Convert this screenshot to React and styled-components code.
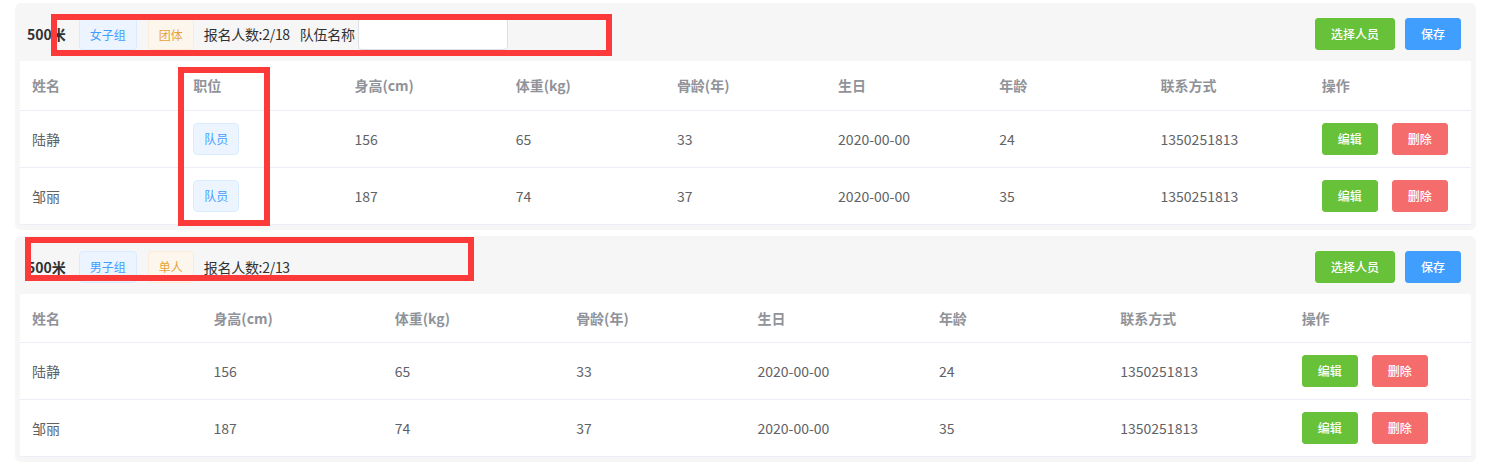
import React from "react";
import styled, { createGlobalStyle } from "styled-components";

const Global = createGlobalStyle`
  html, body { margin: 0; padding: 0; background: #fff; }
  body { font-family: "Noto Sans CJK SC", "Noto Sans", "Liberation Sans", sans-serif; font-size: 14px; color: #606266; }
  * { box-sizing: border-box; }
`;

const Page = styled.div`
  position: relative;
  width: 1498px;
  height: 466px;
  padding: 3px 22px 0 15px;
  display: flex;
  flex-direction: column;
  gap: 6px;
  overflow: hidden;
`;

const Card = styled.section`
  background: #f6f6f6;
  border-radius: 6px;
  padding: 0 5px 5px;
`;

const Header = styled.div`
  display: flex;
  align-items: center;
  padding: 15px 10px 11px 7px;
  height: 58px;
`;

const Title = styled.span`
  font-weight: 700;
  color: #303133;
  font-size: 14px;
  margin-right: 13px;
`;

const Tag = styled.span`
  display: inline-flex;
  align-items: center;
  height: 32px;
  padding: 0 10px;
  font-size: 12px;
  border-radius: 4px;
  border: 1px solid ${(p) => (p.$type === "warning" ? "#faecd8" : "#d9ecff")};
  background: ${(p) => (p.$type === "warning" ? "#fdf6ec" : "#ecf5ff")};
  color: ${(p) => (p.$type === "warning" ? "#e6a23c" : "#409eff")};
  margin-right: ${(p) => p.$mr ?? 0}px;
`;

const Info = styled.span`
  color: #303133;
  font-size: 14px;
  letter-spacing: -0.3px;
  margin-right: ${(p) => p.$mr ?? 0}px;
`;

const TeamInput = styled.input`
  width: 150px;
  height: 32px;
  border: 1px solid #dcdfe6;
  border-radius: 4px;
  background: #fff;
  outline: none;
  padding: 0 10px;
  font-family: inherit;
`;

const Spacer = styled.div`
  flex: 1;
`;

const Button = styled.button`
  height: 32px;
  padding: 0 15px;
  font-family: inherit;
  font-size: 12px;
  font-weight: 500;
  line-height: 1;
  color: #fff;
  border: 1px solid ${(p) => p.$color};
  background: ${(p) => p.$color};
  border-radius: 3px;
  cursor: pointer;
  margin-left: ${(p) => p.$ml ?? 0}px;
`;

const Table = styled.table`
  width: 100%;
  border-collapse: collapse;
  table-layout: fixed;
  background: #fff;
`;

const Th = styled.th`
  height: 49px;
  padding: 0 12px;
  text-align: left;
  font-weight: 700;
  font-size: 14px;
  color: #909399;
  border-bottom: 1px solid #ebeef5;
`;

const Td = styled.td`
  height: 57px;
  padding: 0 12px;
  font-size: 14px;
  color: #606266;
  border-bottom: 1px solid #ebeef5;
  white-space: nowrap;
`;

const Actions = styled.div`
  display: flex;
  gap: 14px;
`;

const Mark = styled.div`
  position: absolute;
  border: 6px solid #fd3a3a;
  pointer-events: none;
`;

const members = [
  { name: "陆静", pos: "队员", h: 156, w: 65, bone: 33, bd: "2020-00-00", age: 24, tel: "1350251813" },
  { name: "邹丽", pos: "队员", h: 187, w: 74, bone: 37, bd: "2020-00-00", age: 35, tel: "1350251813" },
];

const sections = [
  { title: "500米", group: "女子组", kind: "团体", count: "2/18", team: true },
  { title: "500米", group: "男子组", kind: "单人", count: "2/13", team: false },
];

function Section({ s }) {
  const cols = s.team
    ? ["姓名", "职位", "身高(cm)", "体重(kg)", "骨龄(年)", "生日", "年龄", "联系方式", "操作"]
    : ["姓名", "身高(cm)", "体重(kg)", "骨龄(年)", "生日", "年龄", "联系方式", "操作"];
  return (
    <Card>
      <Header>
        <Title>{s.title}</Title>
        <Tag $mr={11}>{s.group}</Tag>
        <Tag $type="warning" $mr={10}>{s.kind}</Tag>
        <Info $mr={10}>报名人数:{s.count}</Info>
        {s.team && (
          <>
            <Info $mr={3}>队伍名称</Info>
            <TeamInput />
          </>
        )}
        <Spacer />
        <Button $color="#67c23a">选择人员</Button>
        <Button $color="#409eff" $ml={10}>保存</Button>
      </Header>
      <Table>
        <thead>
          <tr>
            {cols.map((c) => (
              <Th key={c}>{c}</Th>
            ))}
          </tr>
        </thead>
        <tbody>
          {members.map((m) => (
            <tr key={m.name}>
              <Td>{m.name}</Td>
              {s.team && (
                <Td>
                  <Tag>{m.pos}</Tag>
                </Td>
              )}
              <Td>{m.h}</Td>
              <Td>{m.w}</Td>
              <Td>{m.bone}</Td>
              <Td>{m.bd}</Td>
              <Td>{m.age}</Td>
              <Td>{m.tel}</Td>
              <Td>
                <Actions>
                  <Button $color="#67c23a">编辑</Button>
                  <Button $color="#f56c6c">删除</Button>
                </Actions>
              </Td>
            </tr>
          ))}
        </tbody>
      </Table>
    </Card>
  );
}

export default function App() {
  return (
    <>
      <Global />
      <Page>
        {sections.map((s, i) => (
          <Section key={i} s={s} />
        ))}
        <Mark style={{ left: 51, top: 14, width: 561, height: 42 }} />
        <Mark style={{ left: 178, top: 67, width: 92, height: 159 }} />
        <Mark style={{ left: 25, top: 237, width: 449, height: 44 }} />
      </Page>
    </>
  );
}
